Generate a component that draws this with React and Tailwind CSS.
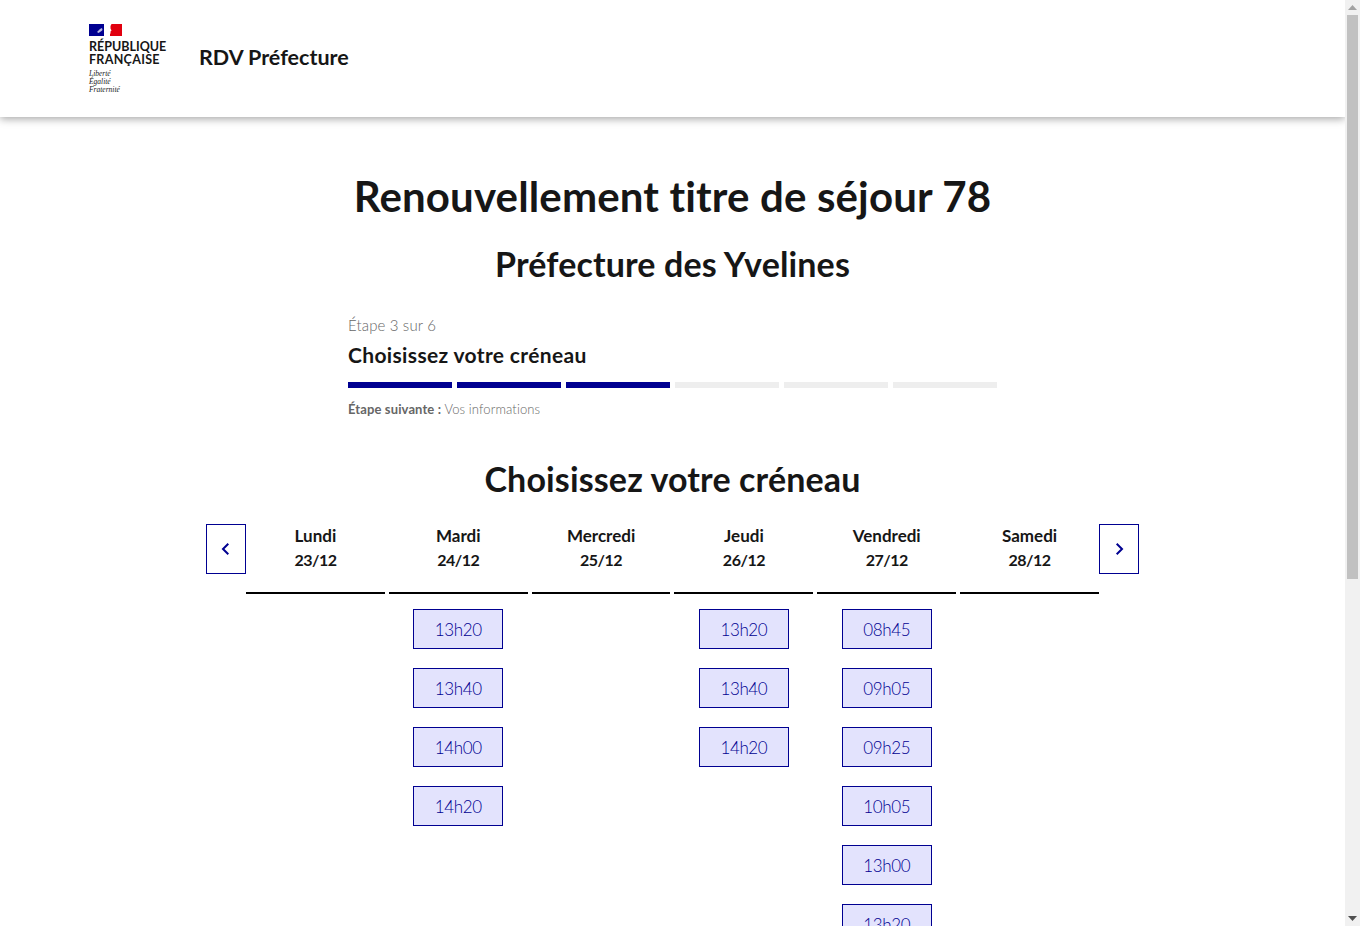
const F = { fontFamily: 'Lato, "Open Sans", sans-serif' };

function Logo() {
  return (
    <div className="flex flex-col w-[80px]">
      <svg width="33" height="12" viewBox="0 0 33 12" className="block">
        <rect width="33" height="12" fill="#fff" />
        <rect width="15" height="12" fill="#000091" />
        <rect x="21" width="12" height="12" fill="#e1000f" />
        <path d="M15 12 L15 0 L22.5 0 L21.5 2 L21.5 4.5 L22.5 6.5 L21.5 7.5 L21.5 9.5 L20.5 10 L21 12 Z" fill="#fff" />
        <path d="M8 8 L9.5 6.5 L11 5 L13 4 L13.5 6 L12.5 7 L11 8 L9.5 9 Z" fill="#b9b9e0" />
      </svg>
      <div className="mt-[4px] text-[12.5px] leading-[13px] font-bold text-[#161616] whitespace-nowrap">
        RÉPUBLIQUE<br /><span className="tracking-[0.3px]">FRANÇAISE</span>
      </div>
      <div className="mt-[4px] text-[7.5px] leading-[8px] italic text-[#222]" style={{ fontFamily: '"Liberation Serif", serif' }}>
        Liberté<br />Égalité<br />Fraternité
      </div>
    </div>
  );
}

const days = [
  ['Lundi', '23/12', []],
  ['Mardi', '24/12', ['13h20', '13h40', '14h00', '14h20']],
  ['Mercredi', '25/12', []],
  ['Jeudi', '26/12', ['13h20', '13h40', '14h20']],
  ['Vendredi', '27/12', ['08h45', '09h05', '09h25', '10h05', '13h00', '13h20', '13h40', '14h00']],
  ['Samedi', '28/12', []],
];

function Chevron({ d }) {
  return (
    <svg width="16" height="16" viewBox="0 0 16 16" fill="none" stroke="#000091" strokeWidth="2">
      <path d={d} />
    </svg>
  );
}

function Scrollbar() {
  return (
    <div className="w-[15px] h-[926px] shrink-0 bg-[#f1f1f1] flex flex-col items-center">
      <div className="h-[15px] w-full flex items-center justify-center">
        <svg width="9" height="5" viewBox="0 0 9 5"><path d="M4.5 0 L9 5 L0 5 Z" fill="#a3a3a3" /></svg>
      </div>
      <div className="w-[11px] h-[564px] bg-[#c1c1c1]" />
      <div className="flex-1" />
      <div className="h-[15px] w-full flex items-center justify-center">
        <svg width="9" height="5" viewBox="0 0 9 5"><path d="M0 0 L9 0 L4.5 5 Z" fill="#505050" /></svg>
      </div>
    </div>
  );
}

export default function App() {
  return (
    <div className="flex h-[926px] overflow-hidden bg-white text-[#161616]" style={F}>
      <div className="flex-1 min-w-0 overflow-hidden">
        <header className="h-[117px] bg-white flex items-start pt-[24px] pl-[89px] shadow-[0_2px_8px_rgba(0,0,0,0.35)] relative">
          <Logo />
          <div className="ml-[30px] mt-[17px] text-[21.5px] leading-[32px] font-bold">RDV Préfecture</div>
        </header>
        <main className="flex flex-col items-center">
          <h1 className="mt-[54px] text-[42px] leading-[50px] font-bold tracking-[0.15px]">Renouvellement titre de séjour 78</h1>
          <h2 className="mt-[20px] text-[34px] leading-[46px] font-bold tracking-[0.13px]">Préfecture des Yvelines</h2>
          <section className="mt-[26px] w-[649px]">
            <div className="text-[15px] leading-[24px] text-[#666] font-light tracking-[0.15px]">Étape 3 sur 6</div>
            <div className="mt-[4px] text-[21px] leading-[28px] font-bold tracking-[0.35px]">Choisissez votre créneau</div>
            <div className="mt-[13px] grid grid-cols-6 gap-x-[5.6px]">
              {[0, 1, 2, 3, 4, 5].map((i) => (
                <div key={i} className={i < 3 ? 'h-[6px] bg-[#000091]' : 'h-[6px] bg-[#eeeeee]'} />
              ))}
            </div>
            <div className="mt-[11px] text-[13px] leading-[20px] text-[#666] tracking-[0.12px]">
              <span className="font-bold">Étape suivante : </span>
              <span className="font-light">Vos informations</span>
            </div>
          </section>
          <h2 className="mt-[37px] text-[34px] leading-[46px] font-bold tracking-[0.13px]">Choisissez votre créneau</h2>
          <div className="mt-[22px] flex items-start w-[933px]">
            <button className="w-[40px] h-[50px] border border-[#000091] flex items-center justify-center shrink-0">
              <Chevron d="M10.3 2.8 L5 8 L10.3 13.2" />
            </button>
            <div className="flex-1 grid grid-cols-6 gap-x-[4px]">
              {days.map(([n, d, slots]) => (
                <div key={n} className="flex flex-col items-center">
                  <div className="w-full h-[70px] border-b-2 border-black text-center text-[17px] leading-[24px] font-bold">
                    {n}<br /><span className="text-[16px] tracking-[-0.5px]">{d}</span>
                  </div>
                  <div className="mt-[15px] flex flex-col gap-[19px]">
                    {slots.map((s, i) => (
                      <div key={i} className="w-[90px] h-[40px] pt-[2px] border border-[#000091] bg-[#e3e3fd] text-[#000091] text-[17px] tracking-[-0.4px] font-light flex items-center justify-center">
                        {s}
                      </div>
                    ))}
                  </div>
                </div>
              ))}
            </div>
            <button className="w-[40px] h-[50px] border border-[#000091] flex items-center justify-center shrink-0">
              <Chevron d="M5.7 2.8 L11 8 L5.7 13.2" />
            </button>
          </div>
        </main>
      </div>
      <Scrollbar />
    </div>
  );
}
